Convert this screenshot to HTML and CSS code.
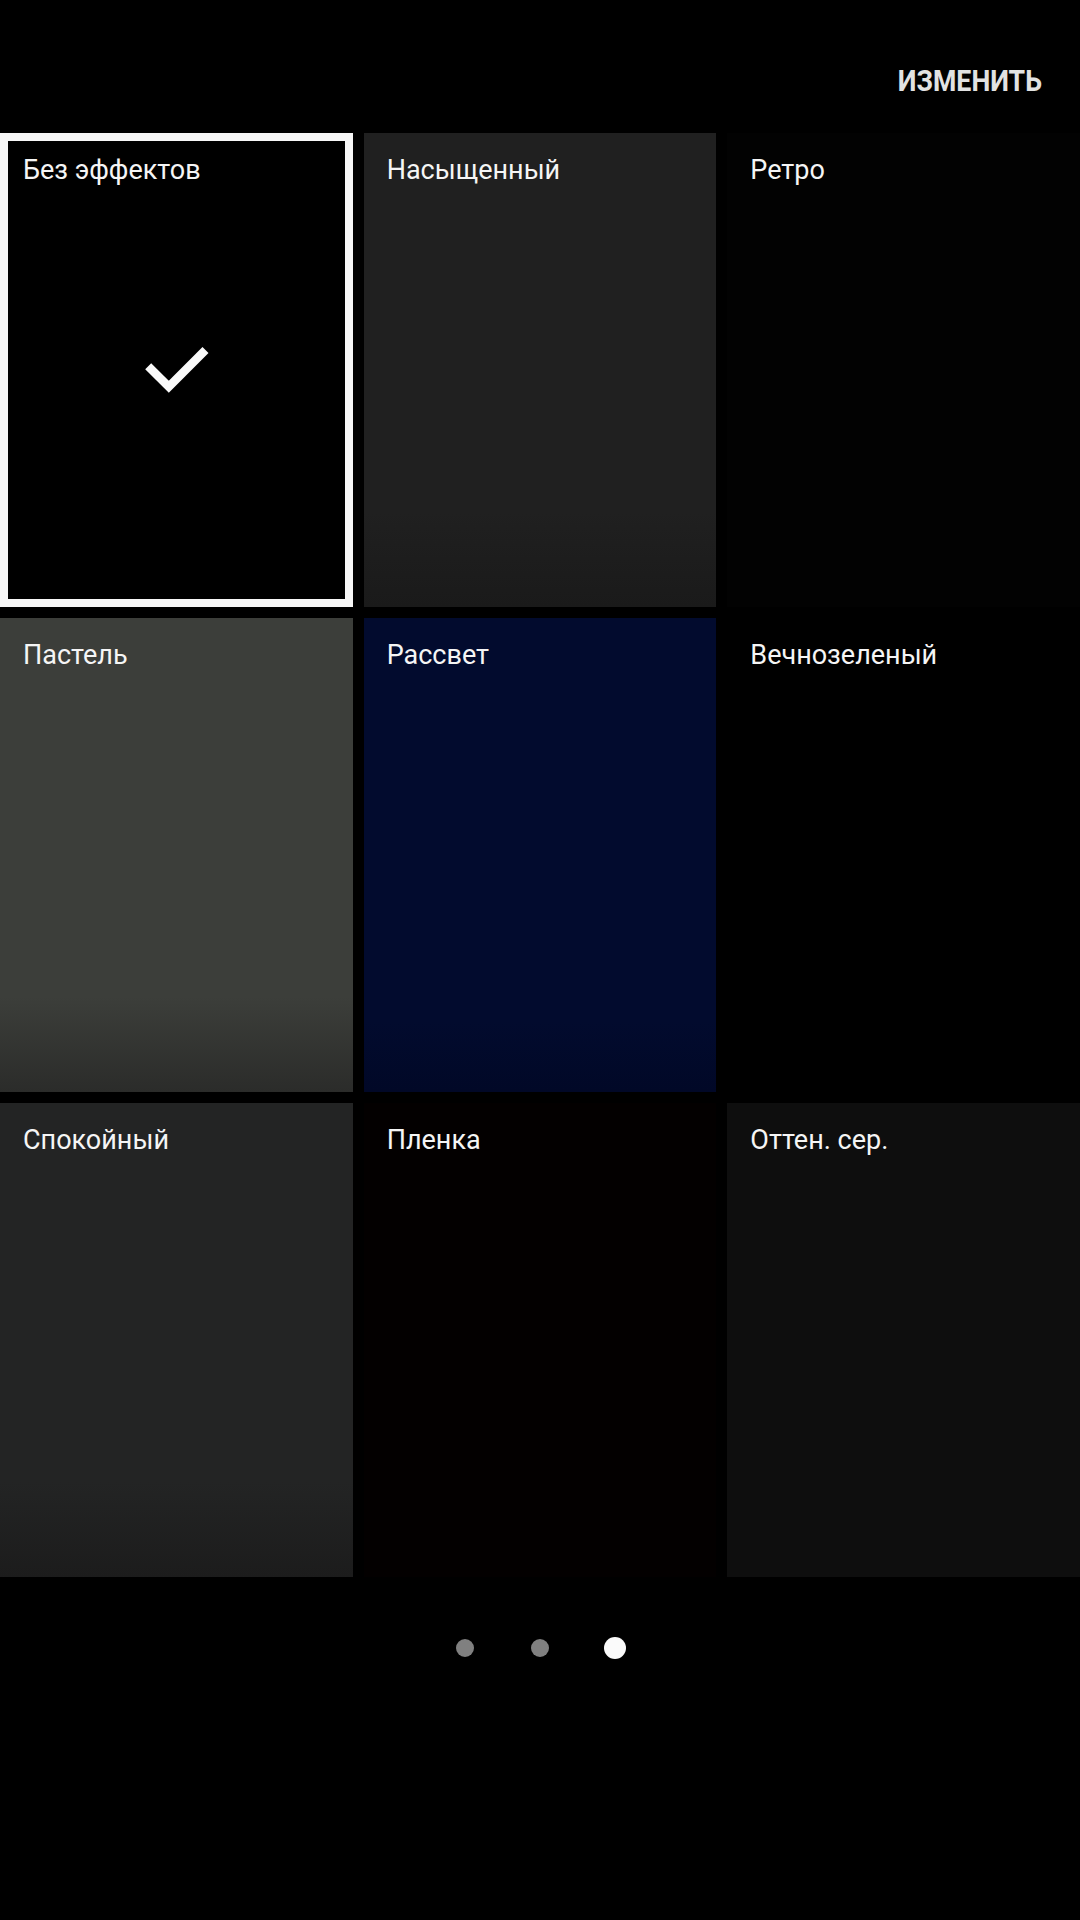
FILE: index.html
```html
<!DOCTYPE html>
<html lang="ru">

<head>
    <meta charset="UTF-8">
    <meta name="viewport" content="width=device-width, initial-scale=1.0">
    <title>Эффекты</title>
    <link rel="stylesheet" href="styles.css">
</head>

<body>
    <div class="screen">
        <div class="topbar">
            <span class="edit">ИЗМЕНИТЬ</span>
        </div>

        <div class="effects">
            <div class="effect none selected">
                <span class="label">Без эффектов</span>
                <svg class="check" viewBox="0 0 84 84">
                    <polyline points="14.2,38.3 34.8,58.7 71.5,22" fill="none" stroke="#fafafa" stroke-width="8.5" stroke-linejoin="miter" />
                </svg>
            </div>
            <div class="effect vivid"><span class="label">Насыщенный</span></div>
            <div class="effect retro"><span class="label">Ретро</span></div>

            <div class="effect pastel"><span class="label">Пастель</span></div>
            <div class="effect dawn"><span class="label">Рассвет</span></div>
            <div class="effect evergreen"><span class="label">Вечнозеленый</span></div>

            <div class="effect calm"><span class="label">Спокойный</span></div>
            <div class="effect film"><span class="label">Пленка</span></div>
            <div class="effect grey"><span class="label">Оттен. сер.</span></div>
        </div>

        <div class="pager">
            <span class="dot"></span>
            <span class="dot"></span>
            <span class="dot active"></span>
        </div>
    </div>
</body>

</html>
```

FILE: styles.css
```css
body {
    margin: 0;
    padding: 0;
    background-color: #000;
    font-family: Roboto, "Noto Sans", sans-serif;
    color: #f5f5f5;
}

.screen {
    width: 1080px;
    height: 1920px;
    background-color: #000;
}

.topbar {
    height: 133px;
    display: flex;
    justify-content: flex-end;
    align-items: flex-start;
    padding-right: 38px;
    box-sizing: border-box;
}

.edit {
    margin-top: 62px;
    font-size: 30px;
    line-height: 38px;
    font-weight: 700;
    color: #e2e2e2;
    transform: scaleX(0.89);
    transform-origin: right center;
}

.effects {
    display: grid;
    grid-template-columns: repeat(3, 1fr);
    grid-auto-rows: 474px;
    gap: 11px;
}

.effect {
    position: relative;
    box-sizing: border-box;
    padding: 19px 23px;
}

.label {
    display: block;
    font-size: 27px;
    line-height: 36px;
    color: #f5f5f5;
}

.selected {
    border: 8px solid #f7f7f7;
    padding: 11px 15px;
}

.check {
    position: absolute;
    left: 50%;
    top: 50%;
    width: 84px;
    height: 84px;
    margin: -42px 0 0 -42px;
}

/* tile colours, most fade a little toward the bottom */
.none { background-color: #000; }
.vivid { background: linear-gradient(#202020 80%, #1a1a1a); }
.retro { background-color: #020202; }
.pastel { background: linear-gradient(#3c3e3a 80%, #2b2c2a); }
.dawn { background: linear-gradient(#020b2e 85%, #010827); }
.evergreen { background-color: #000; }
.calm { background: linear-gradient(#232424 80%, #1c1c1c); }
.film { background-color: #030000; }
.grey { background-color: #0e0e0e; }

.pager {
    display: flex;
    justify-content: center;
    align-items: center;
    gap: 53px;
    margin-top: 60px;
    height: 22px;
}

.dot {
    width: 22px;
    height: 22px;
    display: flex;
    justify-content: center;
    align-items: center;
}

.dot::after {
    content: "";
    width: 18px;
    height: 18px;
    border-radius: 50%;
    background-color: #808080;
}

.dot.active::after {
    width: 22px;
    height: 22px;
    background-color: #fafafa;
}
```
